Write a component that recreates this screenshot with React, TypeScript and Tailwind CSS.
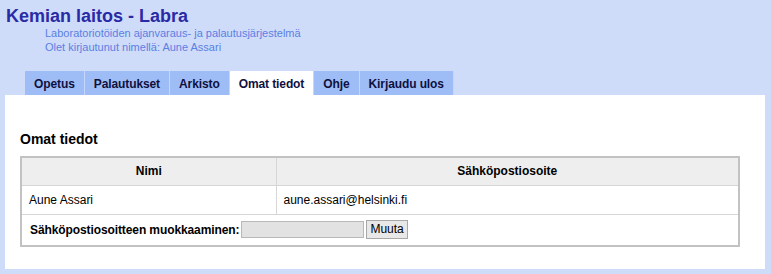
const tabs = ["Opetus", "Palautukset", "Arkisto", "Omat tiedot", "Ohje", "Kirjaudu ulos"];
const active = "Omat tiedot";

export default function App() {
  return (
    <div className="h-[274px] w-[771px] overflow-hidden bg-[#cfdcf9] font-['Liberation_Sans',Arial,sans-serif]">
      <header className="h-[71px] pl-[6px] pt-[6px]">
        <h1 className="text-[18px] font-bold leading-[21px] text-[#2a2aa6]">
          Kemian laitos - Labra
        </h1>
        <div className="-mt-[1px] pl-[39px] text-[11px] leading-[14px] text-[#5b7fe3]">
          <p>Laboratoriotöiden ajanvaraus- ja palautusjärjestelmä</p>
          <p>Olet kirjautunut nimellä: Aune Assari</p>
        </div>
      </header>
      <nav className="flex h-[24px] pl-[25px]">
        {tabs.map((t) => (
          <a
            key={t}
            className={
              "flex items-center border-r border-[#c4d6fb] px-[9px] pt-[1px] text-[12px] font-bold tracking-[-0.1px] " +
              (t === active ? "bg-white text-[#101040]" : "bg-[#9ebdf6] text-[#101040]")
            }
          >
            {t}
          </a>
        ))}
      </nav>
      <main className="ml-[5px] h-[174px] w-[760px] bg-white px-[15px] pt-[36px]">
        <h2 className="text-[14px] font-bold leading-[16px] text-black">Omat tiedot</h2>
        <table className="mt-[9px] w-[720px] border-collapse border-2 border-[#c2c2c2] text-[12px] text-black">
          <thead>
            <tr className="h-[28px] bg-[#eeeeee]">
              <th className="w-[255px] border border-[#d6d6d6] font-bold">Nimi</th>
              <th className="border border-[#d6d6d6] font-bold">Sähköpostiosoite</th>
            </tr>
          </thead>
          <tbody>
            <tr className="h-[29px]">
              <td className="border border-[#d6d6d6] pl-[7px]">Aune Assari</td>
              <td className="border border-[#d6d6d6] pl-[7px]">aune.assari@helsinki.fi</td>
            </tr>
            <tr className="h-[32px]">
              <td colSpan={2} className="border border-[#d6d6d6] pl-[8px]">
                <div className="flex items-center gap-[2px]">
                  <span className="font-bold tracking-[-0.1px]">Sähköpostiosoitteen muokkaaminen:</span>
                  <input className="h-[17px] w-[123px] border border-[#b8b8b8] bg-[#e2e2e2]" />
                  <button className="h-[19px] border border-[#a8a8a8] bg-[#e8e8e8] px-[3px] text-[12px] leading-[15px]">
                    Muuta
                  </button>
                </div>
              </td>
            </tr>
          </tbody>
        </table>
      </main>
    </div>
  );
}
